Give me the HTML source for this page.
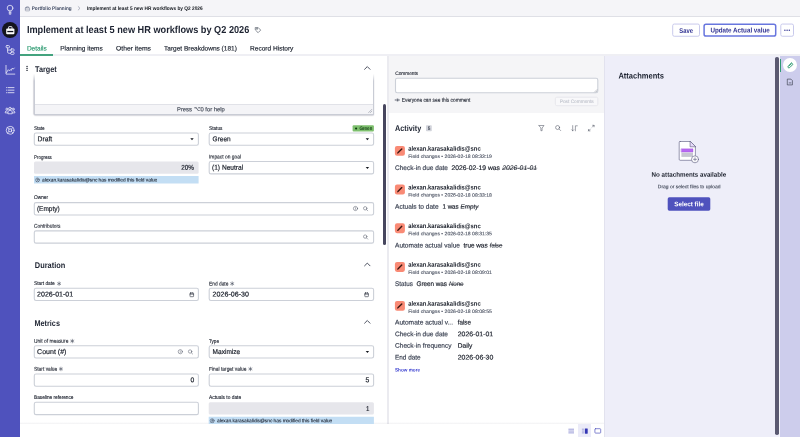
<!DOCTYPE html>
<html lang="en">
<head>
<meta charset="utf-8">
<title>Implement at least 5 new HR workflows by Q2 2026</title>
<style>
*{box-sizing:border-box;margin:0;padding:0}
html,body{width:800px;height:437px;overflow:hidden;background:#fff}
body{position:relative;font-family:"Liberation Sans",sans-serif;color:#1c2230}
.a{position:absolute}
svg.ov{position:absolute;left:0;top:0;overflow:visible;will-change:transform}
</style>
</head>
<body>
<!-- left nav -->
<div class="a" style="left:0;top:0;width:20px;height:437px;background:#4f52bd"></div>
<div class="a" style="left:1.6px;top:21.6px;width:16.6px;height:16.6px;border-radius:50%;background:#14141f"></div>

<!-- breadcrumb bar -->
<div class="a" style="left:20px;top:0;width:780px;height:16.6px;background:#f5f5f8;border-bottom:1px solid #dfe0e6"></div>

<!-- tab strip line -->
<div class="a" style="left:20px;top:54px;width:780px;height:2px;background:#efeff4"></div>
<div class="a" style="left:20px;top:53.7px;width:33.4px;height:1.9px;background:#43a37e"></div>

<!-- ======== LEFT FORM PANEL ======== -->
<!-- Target rich-text box (scrolled under sticky header) -->
<div class="a" style="left:34px;top:70px;width:339.6px;height:44.8px;border:1px solid #c9ccd5;border-top:none;border-radius:0 0 1.5px 1.5px;background:#fff;box-shadow:0 .6px 1.2px rgba(60,60,90,.2),-.4px 0 1px rgba(60,60,90,.18)"></div>
<div class="a" style="left:35px;top:104px;width:337.6px;height:9.9px;background:#f4f4f7;border-top:1px solid #e1e2e8"></div>
<div class="a" style="left:31px;top:69px;width:346px;height:12px;background:linear-gradient(#fff 40%,rgba(255,255,255,0))"></div>

<!-- State / Status -->

<!-- Progress / Impact on goal -->

<!-- Owner / Contributors -->

<!-- Duration -->

<!-- Metrics -->

<!-- left panel scrollbar thumb -->
<div class="a" style="left:383px;top:104px;width:3.2px;height:141.4px;background:#47465e;border-radius:1.6px"></div>

<!-- ======== ACTIVITY PANEL ======== -->
<div class="a" style="left:387px;top:56px;width:2px;height:381px;background:#ebebf0"></div>
<div class="a" style="left:389px;top:55.6px;width:215.6px;height:57.4px;background:#f5f5f7"></div>

<!-- footer -->
<div class="a" style="left:20px;top:421.6px;width:584.6px;height:2.6px;background:linear-gradient(rgba(60,60,90,0),rgba(60,60,90,.07))"></div>
<div class="a" style="left:20px;top:424px;width:584.6px;height:13px;background:#fff"></div>
<div class="a" style="left:578px;top:424.4px;width:12.8px;height:12.6px;background:#ebebf8"></div>

<!-- ======== ATTACHMENTS PANEL ======== -->
<div class="a" style="left:604px;top:55.6px;width:176px;height:381.4px;background:#eeeef9;border-left:1px solid #e2e2ee"></div>
<div class="a" style="left:775px;top:57px;width:3.6px;height:378px;background:#5a5971;border-radius:1.8px"></div>
<div class="a" style="left:778.8px;top:55.6px;width:1.2px;height:381.4px;background:#f6f6fb"></div>

<!-- right rail -->
<div class="a" style="left:780px;top:55.6px;width:20px;height:381.4px;background:#cdcdec"></div>
<div class="a" style="left:780px;top:58.6px;width:.9px;height:13.4px;background:#2f9b72"></div>
<div class="a" style="left:783.1px;top:58.2px;width:13.8px;height:13.8px;border-radius:50%;background:#fff"></div>

<svg class="ov" width="800" height="437" viewBox="0 0 800 437" font-family="'Liberation Sans', sans-serif">
<g id="boxes">
<rect x="34.3" y="133.00" width="164.10" height="12.30" rx="1.7" fill="#fff" stroke="#ccd0d8" stroke-width="1.1"/>
<rect x="209.2" y="133.00" width="164.40" height="12.30" rx="1.7" fill="#fff" stroke="#ccd0d8" stroke-width="1.1"/>
<rect x="209.2" y="161.55" width="164.40" height="12.30" rx="1.7" fill="#fff" stroke="#ccd0d8" stroke-width="1.1"/>
<rect x="34.3" y="202.65" width="339.30" height="12.30" rx="1.7" fill="#fff" stroke="#ccd0d8" stroke-width="1.1"/>
<rect x="34.3" y="230.85" width="339.30" height="12.30" rx="1.7" fill="#fff" stroke="#ccd0d8" stroke-width="1.1"/>
<rect x="34.3" y="288.25" width="164.10" height="12.30" rx="1.7" fill="#fff" stroke="#ccd0d8" stroke-width="1.1"/>
<rect x="209.2" y="288.25" width="164.40" height="12.30" rx="1.7" fill="#fff" stroke="#ccd0d8" stroke-width="1.1"/>
<rect x="34.3" y="345.70" width="164.10" height="12.30" rx="1.7" fill="#fff" stroke="#ccd0d8" stroke-width="1.1"/>
<rect x="209.2" y="345.70" width="164.40" height="12.30" rx="1.7" fill="#fff" stroke="#ccd0d8" stroke-width="1.1"/>
<rect x="34.3" y="374.00" width="164.10" height="12.30" rx="1.7" fill="#fff" stroke="#ccd0d8" stroke-width="1.1"/>
<rect x="209.2" y="374.00" width="164.40" height="12.30" rx="1.7" fill="#fff" stroke="#ccd0d8" stroke-width="1.1"/>
<rect x="34.3" y="402.30" width="164.10" height="12.30" rx="1.7" fill="#fff" stroke="#ccd0d8" stroke-width="1.1"/>
<rect x="34" y="161.45" width="164.60" height="12.4" rx="1.5" fill="#e6e6eb"/>
<rect x="34" y="176.00" width="164.60" height="7.50" fill="#c3def4"/>
<rect x="208.7" y="402.20" width="165.20" height="12.4" rx="1.5" fill="#e6e6eb"/>
<rect x="208.7" y="416.75" width="165.20" height="7.25" fill="#c3def4"/>
<rect x="395.5" y="78.3" width="202.3" height="14.4" rx="1.7" fill="#fff" stroke="#ccd0d8" stroke-width="1.1"/>
<rect x="394.9" y="145.9" width="10" height="9.9" rx="2.1" fill="#f98a75"/>
<rect x="394.9" y="184.6" width="10" height="9.9" rx="2.1" fill="#f98a75"/>
<rect x="394.9" y="223.3" width="10" height="9.9" rx="2.1" fill="#f98a75"/>
<rect x="394.9" y="262" width="10" height="9.9" rx="2.1" fill="#f98a75"/>
<rect x="394.9" y="300.9" width="10" height="9.9" rx="2.1" fill="#f98a75"/>
<rect x="352.6" y="125.2" width="21.3" height="6.4" rx="1" fill="#7dbf6d"/>
<rect x="555.4" y="97.2" width="42.4" height="8.5" rx="1.5" fill="#f8f8fa" stroke="#e4e5ea" stroke-width=".8"/>
<rect x="426" y="125.3" width="5.8" height="5.9" rx=".8" fill="#d3d5dc"/>
<rect x="667.7" y="197.3" width="42.6" height="13.4" rx="1.6" fill="#4f52bd"/>
<rect x="672.7" y="24.05" width="26.8" height="12.2" rx="1.6" fill="#fff" stroke="#c3c4ea" stroke-width=".9"/>
<rect x="704.1" y="24.2" width="71.6" height="11.9" rx="1.9" fill="#fff" stroke="#6876de" stroke-width="1.5"/>
<rect x="780.8" y="24.05" width="12.7" height="12.2" rx="1.6" fill="#fff" stroke="#c3c4ea" stroke-width=".9"/>
</g>
<g id="icons" fill="none" stroke-linecap="round" stroke-linejoin="round">
<!-- left nav icons -->
<g stroke="#f1f1fb" stroke-width=".78">
  <g transform="translate(10.05,8.1)"><circle r="2.85"/><path d="M-.75 3.2V6.2H.75V3.2M-.75 4.7H.75" stroke-width=".7"/></g>
  <g transform="translate(10.3,30)"><rect x="-4.1" y="-1.6" width="8.2" height="5.8" rx="1" fill="#fff" stroke="none"/><rect x="-3" y=".9" width="6" height="1.3" fill="#14141f" stroke="none"/><path d="M-1.7-1.4V-2.9Q-1.7-3.4-1.2-3.4H1.2Q1.7-3.4 1.7-2.9V-1.4" stroke-width=".9"/></g>
  <g stroke-width=".75"><rect x="6.1" y="45.6" width="3.4" height="2.3" rx=".9"/><rect x="10.8" y="48.9" width="3.3" height="2.3" rx=".9"/><rect x="10.6" y="52.1" width="3.5" height="2.3" rx=".9"/><path d="M7.6 47.9V52Q7.6 53.3 8.9 53.3H10.6M7.6 50.05H10.8"/></g>
  <g transform="translate(0,0)"><path d="M6 65.4V74.1H14.8M6.5 72.6L8.3 69.7L9.3 70.7L10.4 69.6L11.1 70.5L12.3 68.1L13.2 69.2L14.3 68"/></g>
  <g stroke-width=".8"><path d="M8 87.6H14M8 90.15H14M8 92.7H14M6.45 87.6H6.55M6.45 90.15H6.55M6.45 92.7H6.55"/></g>
  <g transform="translate(10.05,110.4)" stroke-width=".75"><circle cx="0" cy="-1.9" r="1.25"/><circle cx="-3.1" cy="-1.3" r="1.05"/><circle cx="3.1" cy="-1.3" r="1.05"/><path d="M-2.1 3V1.5Q-2.1 0 0 0Q2.1 0 2.1 1.5V3ZM-2.3 2.5H-4.8V1.6Q-4.8.4-3.1.4M2.3 2.5H4.8V1.6Q4.8.4 3.1.4"/></g>
  <g transform="translate(10.15,130.3)"><circle r="3.9"/><circle r="1.6"/><path d="M-2.75-2.75L-1.15-1.15M2.75-2.75L1.15-1.15M-2.75 2.75L-1.15 1.15M2.75 2.75L1.15 1.15"/></g>
</g>
<!-- breadcrumb icons -->
<g stroke="#69718a" stroke-width=".48">
  <g transform="translate(27.45,8.6)"><rect x="-2.1" y="-1" width="4.2" height="3.3" rx=".5"/><path d="M-.9-1V-1.9H.9V-1M-2.1.5H2.1"/></g>
  <path d="M78.2 6.6L80 8.3L78.2 10"/>
</g>
<!-- tag icon by title -->
<g stroke="#3d4454" stroke-width=".6" transform="translate(258,30)"><path d="M-2.4-2.4H.2L2.7.1L.1 2.7L-2.4.2Z"/><circle cx="-1.1" cy="-1.1" r=".35"/></g>
<!-- more (...) button -->
<g fill="#2f3192" stroke="none"><circle cx="784.9" cy="30.2" r=".7"/><circle cx="787.1" cy="30.2" r=".7"/><circle cx="789.3" cy="30.2" r=".7"/></g>
<!-- drag handle -->
<g fill="#1f2430" stroke="none"><circle cx="27.05" cy="66.5" r=".72"/><circle cx="27.05" cy="68.45" r=".72"/><circle cx="27.05" cy="70.4" r=".72"/></g>
<!-- section chevrons -->
<g stroke="#3a4050" stroke-width=".9">
  <path d="M364.6 69.3L367.3 66.6L370 69.3"/>
  <path d="M364.6 265.8L367.3 263.1L370 265.8"/>
  <path d="M364.6 323.2L367.3 320.5L370 323.2"/>
</g>
<!-- textarea resize handle -->
<g stroke="#7d8290" stroke-width=".5"><path d="M368.6 112.6L371.8 109.4M370.4 112.6L371.8 111.2"/></g>
<!-- select carets -->
<g fill="#14181f" stroke="none">
  <path d="M190.3 138.3H193.7L192 140.3Z"/>
  <path d="M365.7 138.3H369.1L367.4 140.3Z"/>
  <path d="M365.7 166.9H369.1L367.4 168.9Z"/>
  <path d="M365.7 350.9H369.1L367.4 352.9Z"/>
</g>
<!-- status badge dot -->
<circle cx="356.1" cy="128.5" r="1.1" fill="#0b3d0b" stroke="none"/>
<!-- info-bar icons -->
<g stroke="#3a4354" stroke-width=".45">
  <g transform="translate(37.5,179.95)"><circle r="2"/><circle cy="-.55" r=".7"/><path d="M-1.35 1.45Q0-.35 1.35 1.45"/></g>
  <g transform="translate(212.2,420.7)"><circle r="2"/><circle cy="-.55" r=".7"/><path d="M-1.35 1.45Q0-.35 1.35 1.45"/></g>
</g>
<!-- reference field icons: info + search -->
<g stroke="#4a5060" stroke-width=".5">
  <g transform="translate(355.5,208.5)"><circle r="2.1"/><path d="M0 0V.8M0-.85V-.8" stroke-width=".45"/></g>
  <g transform="translate(365.2,208.3)"><circle r="1.7"/><path d="M1.3 1.3L2.5 2.5"/></g>
  <g transform="translate(365.2,236.6)"><circle r="1.7"/><path d="M1.3 1.3L2.5 2.5"/></g>
  <g transform="translate(180.3,351.7)"><circle r="2.1"/><path d="M0 0V.8M0-.85V-.8" stroke-width=".45"/></g>
  <g transform="translate(190.1,351.5)"><circle r="1.7"/><path d="M1.3 1.3L2.5 2.5"/></g>
</g>
<!-- calendar icons -->
<g stroke="#2d3340" stroke-width=".6">
  <g transform="translate(191.8,294.7)"><rect x="-1.8" y="-1.6" width="3.6" height="3.6" rx=".5"/><path d="M-1.8-.5H1.8M-.9-2.2V-1.6M.9-2.2V-1.6"/></g>
  <g transform="translate(366.6,294.7)"><rect x="-1.8" y="-1.6" width="3.6" height="3.6" rx=".5"/><path d="M-1.8-.5H1.8M-.9-2.2V-1.6M.9-2.2V-1.6"/></g>
</g>
<!-- required asterisks -->
<g stroke="#3d4454" stroke-width=".55">
  <g transform="translate(59.1,283.65)"><path d="M0-1.8V1.8M-1.56-.9L1.56.9M-1.56.9L1.56-.9"/></g>
  <g transform="translate(232.2,283.65)"><path d="M0-1.8V1.8M-1.56-.9L1.56.9M-1.56.9L1.56-.9"/></g>
  <g transform="translate(72.3,341.05)"><path d="M0-1.8V1.8M-1.56-.9L1.56.9M-1.56.9L1.56-.9"/></g>
  <g transform="translate(60.9,368.95)"><path d="M0-1.8V1.8M-1.56-.9L1.56.9M-1.56.9L1.56-.9"/></g>
  <g transform="translate(250.4,368.95)"><path d="M0-1.8V1.8M-1.56-.9L1.56.9M-1.56.9L1.56-.9"/></g>
</g>
<!-- comments: eye + textarea grip -->
<g stroke="#3d4454" stroke-width=".5">
  <g transform="translate(397.5,100)" stroke-width=".42"><path d="M-2.3 0Q0-2.7 2.3 0Q0 2.7-2.3 0Z"/><circle r=".55" fill="#3d4454"/></g>
  <path stroke="#8c909c" d="M594.6 92L597 89.6M596 92L597 91"/>
</g>
<!-- activity toolbar -->
<g stroke="#474d5c" stroke-width=".52">
  <g transform="translate(541.5,128.1)"><path d="M-2.5-2.6H2.5L.6 0V2.6H-.6V0Z"/></g>
  <g transform="translate(557.6,127.5)"><circle r="2"/><path d="M1.5 1.5L3.1 3.1"/></g>
  <g transform="translate(574.5,128.2)"><path d="M-1.8-2.6V2.6M-2.8 1.6L-1.8 2.6L-.8 1.6M.9 2.6V-2.4H2.8"/></g>
  <g transform="translate(591.3,128.1)"><path d="M-2.8 2.8L-1 1M-2.8 1.3V2.8H-1.3M1-1L2.8-2.8M1.3-2.8H2.8V-1.3"/></g>
</g>
<!-- pencil in avatars -->
<g fill="#3a1812" stroke="none">
  <g transform="translate(399.8,150.9)"><path d="M-2.8 2.8L-2.4 1.4L1.5-2.5Q1.9-2.9 2.3-2.5L2.5-2.3Q2.9-1.9 2.5-1.5L-1.4 2.4Z"/></g>
  <g transform="translate(399.8,189.6)"><path d="M-2.8 2.8L-2.4 1.4L1.5-2.5Q1.9-2.9 2.3-2.5L2.5-2.3Q2.9-1.9 2.5-1.5L-1.4 2.4Z"/></g>
  <g transform="translate(399.8,228.3)"><path d="M-2.8 2.8L-2.4 1.4L1.5-2.5Q1.9-2.9 2.3-2.5L2.5-2.3Q2.9-1.9 2.5-1.5L-1.4 2.4Z"/></g>
  <g transform="translate(399.8,267)"><path d="M-2.8 2.8L-2.4 1.4L1.5-2.5Q1.9-2.9 2.3-2.5L2.5-2.3Q2.9-1.9 2.5-1.5L-1.4 2.4Z"/></g>
  <g transform="translate(399.8,305.9)"><path d="M-2.8 2.8L-2.4 1.4L1.5-2.5Q1.9-2.9 2.3-2.5L2.5-2.3Q2.9-1.9 2.5-1.5L-1.4 2.4Z"/></g>
</g>
<!-- footer layout icons -->
<g stroke="none">
  <g fill="#b4b5e2"><rect x="568.4" y="428.6" width="5.6" height="1.3"/><rect x="568.4" y="430.4" width="5.6" height="1.3"/><rect x="568.4" y="432.2" width="5.6" height="1.3"/></g>
  <g fill="#b4b5e2"><rect x="581.9" y="428.6" width="2.4" height="1.3"/><rect x="581.9" y="430.4" width="2.4" height="1.3"/><rect x="581.9" y="432.2" width="2.4" height="1.3"/></g>
  <rect x="584.9" y="428.4" width="2.8" height="5.3" rx=".4" fill="#3436b4"/>
  <rect x="594.9" y="428.7" width="5.8" height="4.4" rx=".7" fill="#fff" stroke="#4f52bd" stroke-width=".7"/>
</g>
<!-- attachments empty-state illustration -->
<g transform="translate(678.9,141.1)">
  <path d="M1.2.4H11.2L16.5 5.7V18.2Q16.5 19.2 15.5 19.2H1.2Q.3 19.2 .3 18.2V1.4Q.3.4 1.2.4Z" fill="#fff" stroke="#55557a" stroke-width=".6"/>
  <path d="M11.2.4V5.7H16.5Z" fill="#e6d9fa" stroke="#55557a" stroke-width=".6"/>
  <rect x="2.5" y="7.7" width="11.6" height="3.3" fill="#b768f2" stroke="#9a4fd6" stroke-width=".35"/>
  <rect x="2.5" y="11.5" width="11.6" height="4.3" fill="#c6c6d1" stroke="none"/>
  <circle cx="16.1" cy="18.2" r="3.5" fill="#fff" stroke="#55557a" stroke-width=".6"/>
  <path d="M14.6 18.2H17.6M16.1 16.7V19.7" stroke="#55557a" stroke-width=".6"/>
</g>
<!-- right rail icons -->
<g stroke="#2f9b72" stroke-width=".95" transform="translate(790.1,65.4)"><path d="M1.5-2.7L-1.9.7Q-2.6 1.5-1.9 2.2Q-1.2 2.9-.4 2.2L2.4-.6Q2.9-1.2 2.4-1.7Q1.9-2.2 1.3-1.7L-.9.5"/></g>
<g stroke="#2d3340" stroke-width=".6" transform="translate(790,82)"><path d="M-2.3-2.9H.9L2.4-1.4V2.9H-2.3Z"/><path d="M-.8.9H.9"/></g>
</g>

<g id="texts">
<text transform="translate(31.7 9.90) rotate(.03) scale(0.8932 1)" font-size="5.2" fill="#3f4a63" font-weight="bold">Portfolio Planning</text>
<text transform="translate(87 9.90) rotate(.03) scale(0.9196 1)" font-size="5.2" fill="#14181f" font-weight="bold">Implement at least 5 new HR workflows by Q2 2026</text>
<text transform="translate(26.9 33.00) rotate(.03) scale(0.9105 1)" font-size="10.1" fill="#1c2230" font-weight="bold">Implement at least 5 new HR workflows by Q2 2026</text>
<text transform="translate(26.9 50.50) rotate(.03) scale(1.0013 1)" font-size="6.5" fill="#2f9b72" stroke="#2f9b72" stroke-width="0.175">Details</text>
<text transform="translate(60.2 50.50) rotate(.03) scale(0.9990 1)" font-size="6.5" fill="#222834" stroke="#222834" stroke-width="0.175">Planning items</text>
<text transform="translate(116 50.50) rotate(.03) scale(1.0419 1)" font-size="6.5" fill="#222834" stroke="#222834" stroke-width="0.175">Other items</text>
<text transform="translate(164 50.50) rotate(.03) scale(1.0052 1)" font-size="6.5" fill="#222834" stroke="#222834" stroke-width="0.175">Target Breakdowns (181)</text>
<text transform="translate(250 50.50) rotate(.03) scale(1.0120 1)" font-size="6.5" fill="#222834" stroke="#222834" stroke-width="0.175">Record History</text>
<text transform="translate(679.25 32.50) rotate(.03) scale(0.8344 1)" font-size="7.0" fill="#2f3192" font-weight="bold">Save</text>
<text transform="translate(710.4 32.50) rotate(.03) scale(0.8926 1)" font-size="7.0" fill="#2f3192" font-weight="bold">Update Actual value</text>
<text transform="translate(35 71.50) rotate(.03) scale(0.8768 1)" font-size="8.3" fill="#1c2230" font-weight="bold">Target</text>
<text transform="translate(177 111.30) rotate(.03) scale(0.9883 1)" font-size="5.9" fill="#444b58" stroke="#444b58" stroke-width="0.159">Press ⌥0 for help</text>
<text transform="translate(34 130.10) rotate(.03) scale(0.8253 1)" font-size="5.5" fill="#1f2430" stroke="#1f2430" stroke-width="0.132">State</text>
<text transform="translate(37.5 141.30) rotate(.03) scale(0.9722 1)" font-size="7.0" fill="#181d28" stroke="#181d28" stroke-width="0.189">Draft</text>
<text transform="translate(209 130.10) rotate(.03) scale(0.8593 1)" font-size="5.5" fill="#1f2430" stroke="#1f2430" stroke-width="0.132">Status</text>
<text transform="translate(212.6 141.30) rotate(.03) scale(0.9297 1)" font-size="7.0" fill="#181d28" stroke="#181d28" stroke-width="0.189">Green</text>
<text transform="translate(359.4 130.10) rotate(.03) scale(0.9416 1)" font-size="4.9" fill="#123a14" stroke="#123a14" stroke-width="0.118">Green</text>
<text transform="translate(34 158.60) rotate(.03) scale(0.8131 1)" font-size="5.5" fill="#1f2430" stroke="#1f2430" stroke-width="0.132">Progress</text>
<text transform="translate(181.25 169.85) rotate(.03) scale(0.9097 1)" font-size="7.0" fill="#181d28" stroke="#181d28" stroke-width="0.189">20%</text>
<text transform="translate(42 181.40) rotate(.03) scale(0.9783 1)" font-size="4.9" fill="#1d2533" stroke="#1d2533" stroke-width="0.118">alexan.karasakalidis@snc has modified this field value</text>
<text transform="translate(209 158.60) rotate(.03) scale(0.8870 1)" font-size="5.5" fill="#1f2430" stroke="#1f2430" stroke-width="0.132">Impact on goal</text>
<text transform="translate(212 169.85) rotate(.03) scale(0.9462 1)" font-size="7.0" fill="#181d28" stroke="#181d28" stroke-width="0.189">(1) Neutral</text>
<text transform="translate(34 199.40) rotate(.03) scale(0.8702 1)" font-size="5.5" fill="#1f2430" stroke="#1f2430" stroke-width="0.132">Owner</text>
<text transform="translate(36.9 210.95) rotate(.03) scale(0.9306 1)" font-size="7.0" fill="#181d28" stroke="#181d28" stroke-width="0.189">(Empty)</text>
<text transform="translate(34 227.80) rotate(.03) scale(0.8876 1)" font-size="5.5" fill="#1f2430" stroke="#1f2430" stroke-width="0.132">Contributors</text>
<text transform="translate(34.8 268.00) rotate(.03) scale(0.8942 1)" font-size="8.3" fill="#1c2230" font-weight="bold">Duration</text>
<text transform="translate(34 285.40) rotate(.03) scale(0.8718 1)" font-size="5.5" fill="#1f2430" stroke="#1f2430" stroke-width="0.132">Start date</text>
<text transform="translate(37.1 296.55) rotate(.03) scale(1.0108 1)" font-size="7.0" fill="#181d28" stroke="#181d28" stroke-width="0.189">2026-01-01</text>
<text transform="translate(209 285.40) rotate(.03) scale(0.8806 1)" font-size="5.5" fill="#1f2430" stroke="#1f2430" stroke-width="0.132">End date</text>
<text transform="translate(212.6 296.55) rotate(.03) scale(1.0164 1)" font-size="7.0" fill="#181d28" stroke="#181d28" stroke-width="0.189">2026-06-30</text>
<text transform="translate(34.5 326.00) rotate(.03) scale(0.8774 1)" font-size="8.3" fill="#1c2230" font-weight="bold">Metrics</text>
<text transform="translate(34 342.80) rotate(.03) scale(0.8860 1)" font-size="5.5" fill="#1f2430" stroke="#1f2430" stroke-width="0.132">Unit of measure</text>
<text transform="translate(37.1 354.00) rotate(.03) scale(1.0073 1)" font-size="7.0" fill="#181d28" stroke="#181d28" stroke-width="0.189">Count (#)</text>
<text transform="translate(209 342.80) rotate(.03) scale(0.8377 1)" font-size="5.5" fill="#1f2430" stroke="#1f2430" stroke-width="0.132">Type</text>
<text transform="translate(212.6 354.00) rotate(.03) scale(0.9353 1)" font-size="7.0" fill="#181d28" stroke="#181d28" stroke-width="0.189">Maximize</text>
<text transform="translate(34 370.70) rotate(.03) scale(0.8860 1)" font-size="5.5" fill="#1f2430" stroke="#1f2430" stroke-width="0.132">Start value</text>
<text transform="translate(190.4 382.30) rotate(.03) scale(0.9728 1)" font-size="7.0" fill="#181d28" stroke="#181d28" stroke-width="0.189">0</text>
<text transform="translate(209 370.70) rotate(.03) scale(0.8909 1)" font-size="5.5" fill="#1f2430" stroke="#1f2430" stroke-width="0.132">Final target value</text>
<text transform="translate(365.6 382.30) rotate(.03) scale(0.9728 1)" font-size="7.0" fill="#181d28" stroke="#181d28" stroke-width="0.189">5</text>
<text transform="translate(34 399.10) rotate(.03) scale(0.8632 1)" font-size="5.5" fill="#1f2430" stroke="#1f2430" stroke-width="0.132">Baseline reference</text>
<text transform="translate(209 399.10) rotate(.03) scale(0.8848 1)" font-size="5.5" fill="#1f2430" stroke="#1f2430" stroke-width="0.132">Actuals to date</text>
<text transform="translate(366 410.60) rotate(.03) scale(0.8704 1)" font-size="7.0" fill="#181d28" stroke="#181d28" stroke-width="0.189">1</text>
<text transform="translate(217 422.30) rotate(.03) scale(0.9783 1)" font-size="4.9" fill="#1d2533" stroke="#1d2533" stroke-width="0.118">alexan.karasakalidis@snc has modified this field value</text>
<text transform="translate(395.2 75.10) rotate(.03) scale(0.9550 1)" font-size="5" fill="#1f2430" stroke="#1f2430" stroke-width="0.120">Comments</text>
<text transform="translate(401.75 101.70) rotate(.03) scale(0.8961 1)" font-size="5.4" fill="#1f2430" stroke="#1f2430" stroke-width="0.130">Everyone can see this comment</text>
<text transform="translate(559.8 103.10) rotate(.03) scale(0.9714 1)" font-size="4.9" fill="#c3c6cf" stroke="#c3c6cf" stroke-width="0.118">Post Comments</text>
<text transform="translate(395 131.30) rotate(.03) scale(0.8738 1)" font-size="8.3" fill="#1c2230" font-weight="bold">Activity</text>
<text transform="translate(427.7 130.10) rotate(.03) scale(1.0000 1)" font-size="4.6" fill="#2c3340" stroke="#2c3340" stroke-width="0.110">5</text>
<text transform="translate(408.2 150.70) rotate(.03) scale(0.8803 1)" font-size="6.67" fill="#171c27" font-weight="bold">alexan.karasakalidis@snc</text>
<text transform="translate(408.2 157.90) rotate(.03) scale(1.0411 1)" font-size="4.9" fill="#4a5161" stroke="#4a5161" stroke-width="0.118">Field changes • 2026-02-18 08:33:19</text>
<text transform="translate(408.2 189.40) rotate(.03) scale(0.8803 1)" font-size="6.67" fill="#171c27" font-weight="bold">alexan.karasakalidis@snc</text>
<text transform="translate(408.2 196.60) rotate(.03) scale(1.0411 1)" font-size="4.9" fill="#4a5161" stroke="#4a5161" stroke-width="0.118">Field changes • 2026-02-18 08:33:18</text>
<text transform="translate(408.2 228.10) rotate(.03) scale(0.8803 1)" font-size="6.67" fill="#171c27" font-weight="bold">alexan.karasakalidis@snc</text>
<text transform="translate(408.2 235.30) rotate(.03) scale(1.0411 1)" font-size="4.9" fill="#4a5161" stroke="#4a5161" stroke-width="0.118">Field changes • 2026-02-18 08:31:35</text>
<text transform="translate(408.2 266.80) rotate(.03) scale(0.8803 1)" font-size="6.67" fill="#171c27" font-weight="bold">alexan.karasakalidis@snc</text>
<text transform="translate(408.2 274.00) rotate(.03) scale(1.0411 1)" font-size="4.9" fill="#4a5161" stroke="#4a5161" stroke-width="0.118">Field changes • 2026-02-18 08:09:01</text>
<text transform="translate(408.2 305.70) rotate(.03) scale(0.8803 1)" font-size="6.67" fill="#171c27" font-weight="bold">alexan.karasakalidis@snc</text>
<text transform="translate(408.2 312.90) rotate(.03) scale(1.0411 1)" font-size="4.9" fill="#4a5161" stroke="#4a5161" stroke-width="0.118">Field changes • 2026-02-18 08:08:55</text>
<text transform="translate(395 170.00) rotate(.03) scale(0.9809 1)" font-size="6.67" fill="#3d4454" stroke="#3d4454" stroke-width="0.180">Check-in due date</text>
<text transform="translate(451.6 170.00) rotate(.03) scale(1.0136 1)" font-size="6.67" fill="#181d28" stroke="#181d28" stroke-width="0.180">2026-02-19 was</text>
<text transform="translate(502.3 170.00) rotate(.03) scale(1.0158 1)" font-size="6.67" fill="#181d28" stroke="#181d28" stroke-width="0.05" font-style="italic">2026-01-01</text>
<text transform="translate(395 208.70) rotate(.03) scale(0.9899 1)" font-size="6.67" fill="#3d4454" stroke="#3d4454" stroke-width="0.180">Actuals to date</text>
<text transform="translate(442.5 208.70) rotate(.03) scale(0.9258 1)" font-size="6.67" fill="#181d28" stroke="#181d28" stroke-width="0.180">1 was</text>
<text transform="translate(460.5 208.70) rotate(.03) scale(0.9536 1)" font-size="6.67" fill="#181d28" stroke="#181d28" stroke-width="0.05" font-style="italic">Empty</text>
<text transform="translate(395 247.40) rotate(.03) scale(0.9867 1)" font-size="6.67" fill="#3d4454" stroke="#3d4454" stroke-width="0.180">Automate actual value</text>
<text transform="translate(463.5 247.40) rotate(.03) scale(0.9580 1)" font-size="6.67" fill="#181d28" stroke="#181d28" stroke-width="0.180">true was</text>
<text transform="translate(489.8 247.40) rotate(.03) scale(0.8889 1)" font-size="6.67" fill="#181d28" stroke="#181d28" stroke-width="0.05" font-style="italic">false</text>
<text transform="translate(395 286.10) rotate(.03) scale(0.9483 1)" font-size="6.67" fill="#3d4454" stroke="#3d4454" stroke-width="0.180">Status</text>
<text transform="translate(416.5 286.10) rotate(.03) scale(0.9476 1)" font-size="6.67" fill="#181d28" stroke="#181d28" stroke-width="0.180">Green was</text>
<text transform="translate(448.9 286.10) rotate(.03) scale(0.9170 1)" font-size="6.67" fill="#181d28" stroke="#181d28" stroke-width="0.05" font-style="italic">None</text>
<text transform="translate(395 324.50) rotate(.03) scale(0.9941 1)" font-size="6.67" fill="#3d4454" stroke="#3d4454" stroke-width="0.180">Automate actual v...</text>
<text transform="translate(457.7 324.50) rotate(.03) scale(0.9458 1)" font-size="6.67" fill="#181d28" stroke="#181d28" stroke-width="0.180">false</text>
<text transform="translate(395 336.20) rotate(.03) scale(0.9809 1)" font-size="6.67" fill="#3d4454" stroke="#3d4454" stroke-width="0.180">Check-in due date</text>
<text transform="translate(457.7 336.20) rotate(.03) scale(1.0393 1)" font-size="6.67" fill="#181d28" stroke="#181d28" stroke-width="0.180">2026-01-01</text>
<text transform="translate(395 347.80) rotate(.03) scale(0.9868 1)" font-size="6.67" fill="#3d4454" stroke="#3d4454" stroke-width="0.180">Check-in frequency</text>
<text transform="translate(457.7 347.80) rotate(.03) scale(0.9935 1)" font-size="6.67" fill="#181d28" stroke="#181d28" stroke-width="0.180">Daily</text>
<text transform="translate(395 359.40) rotate(.03) scale(0.9604 1)" font-size="6.67" fill="#3d4454" stroke="#3d4454" stroke-width="0.180">End date</text>
<text transform="translate(457.7 359.40) rotate(.03) scale(1.0451 1)" font-size="6.67" fill="#181d28" stroke="#181d28" stroke-width="0.180">2026-06-30</text>
<text transform="translate(395 371.60) rotate(.03) scale(0.9522 1)" font-size="4.9" fill="#3a3fd0" font-weight="bold">Show more</text>
<text transform="translate(618.4 78.40) rotate(.03) scale(0.9072 1)" font-size="8.3" fill="#1c2230" font-weight="bold">Attachments</text>
<text transform="translate(651.6 176.70) rotate(.03) scale(0.9348 1)" font-size="6.67" fill="#1a1f2b" font-weight="bold">No attachments available</text>
<text transform="translate(657.8 188.20) rotate(.03) scale(1.0132 1)" font-size="4.9" fill="#3f4656" stroke="#3f4656" stroke-width="0.118">Drag or select files to upload</text>
<text transform="translate(674.3 206.30) rotate(.03) scale(0.9546 1)" font-size="6.6" fill="#ffffff" font-weight="bold">Select file</text>
<path d="M502.00 168.20H537.20" stroke="#181d28" stroke-width=".42" fill="none"/>
<path d="M460.20 206.90H478.80" stroke="#181d28" stroke-width=".42" fill="none"/>
<path d="M489.50 245.60H502.60" stroke="#181d28" stroke-width=".42" fill="none"/>
<path d="M448.60 284.30H463.80" stroke="#181d28" stroke-width=".42" fill="none"/>
</g>
</svg>
</body>
</html>
